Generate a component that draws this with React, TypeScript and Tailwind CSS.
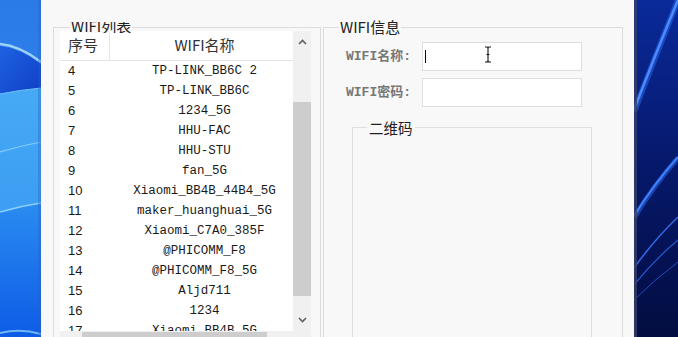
import React from 'react';

const rows: [number, string][] = [
  [4, 'TP-LINK_BB6C 2'],
  [5, 'TP-LINK_BB6C'],
  [6, '1234_5G'],
  [7, 'HHU-FAC'],
  [8, 'HHU-STU'],
  [9, 'fan_5G'],
  [10, 'Xiaomi_BB4B_44B4_5G'],
  [11, 'maker_huanghuai_5G'],
  [12, 'Xiaomi_C7A0_385F'],
  [13, '@PHICOMM_F8'],
  [14, '@PHICOMM_F8_5G'],
  [15, 'Aljd711'],
  [16, '1234'],
  [17, 'Xiaomi_BB4B_5G'],
];

const cjk = "font-['Noto_Sans_CJK_SC',sans-serif]";

const Chevron = ({ up }: { up?: boolean }) => (
  <svg width="9" height="6" viewBox="0 0 9 6">
    <path d={up ? 'M1 5 L4.5 1.5 L8 5' : 'M1 1 L4.5 4.5 L8 1'} fill="none" stroke="#606060" strokeWidth="1.6" />
  </svg>
);

const LeftWallpaper = () => (
  <svg width="41" height="337" viewBox="0 0 41 337" className="block shrink-0">
    <defs>
      <linearGradient id="lw1" x1="0" y1="0" x2="0" y2="1">
        <stop offset="0" stopColor="#2a7ae8" />
        <stop offset="1" stopColor="#3b93f0" />
      </linearGradient>
      <linearGradient id="lw2" x1="0" y1="0" x2="1" y2="1">
        <stop offset="0" stopColor="#1f62e2" />
        <stop offset="1" stopColor="#0f3fc6" />
      </linearGradient>
      <linearGradient id="lw3" x1="0" y1="0" x2="0" y2="1">
        <stop offset="0" stopColor="#47aaf5" />
        <stop offset="1" stopColor="#3c9df2" />
      </linearGradient>
      <linearGradient id="lw4" x1="0" y1="0" x2="0" y2="1">
        <stop offset="0" stopColor="#2a8cf0" />
        <stop offset="1" stopColor="#0e5be6" />
      </linearGradient>
    </defs>
    <rect width="41" height="337" fill="url(#lw1)" />
    <path d="M0 46 Q20 48 41 64 L41 88 Q20 90 0 94 Z" fill="url(#lw2)" />
    <path d="M0 44 Q20 46 41 62" fill="none" stroke="#9fd2f8" strokeWidth="2.5" />
    <path d="M0 94 Q20 90 41 88 L41 205 Q20 206 0 212 Z" fill="url(#lw3)" />
    <path d="M0 94 Q20 90 41 88" fill="none" stroke="#6cc0f7" strokeWidth="1.2" />
    <path d="M0 152 Q20 146 41 142" fill="none" stroke="#82ccf8" strokeWidth="1.2" />
    <path d="M0 212 Q20 206 41 203 L41 337 L0 337 Z" fill="url(#lw4)" />
    <path d="M0 212 Q20 206 41 203" fill="none" stroke="#8ccff8" strokeWidth="1.4" />
    <path d="M0 333 Q20 328 41 334" fill="none" stroke="#6fb8f5" strokeWidth="2" />
    <rect x="38" width="3" height="337" fill="#2a5fc0" opacity="0.35" />
  </svg>
);

const RightWallpaper = () => (
  <svg width="44" height="337" viewBox="0 0 44 337" className="block shrink-0">
    <defs>
      <linearGradient id="rw" x1="0" y1="0" x2="0" y2="1">
        <stop offset="0" stopColor="#0a2a9a" />
        <stop offset="0.5" stopColor="#06186a" />
        <stop offset="1" stopColor="#030d40" />
      </linearGradient>
    </defs>
    <rect width="44" height="337" fill="url(#rw)" />
    <path d="M0 112 Q20 60 44 0" fill="none" stroke="#2b6cf0" strokeWidth="6" opacity="0.5" />
    <path d="M0 110 Q20 58 44 0" fill="none" stroke="#4a8cff" strokeWidth="2.5" />
    <path d="M0 218 Q20 185 44 158" fill="none" stroke="#2f6ef0" strokeWidth="5" opacity="0.5" />
    <path d="M0 216 Q20 184 44 157" fill="none" stroke="#3d82ff" strokeWidth="2" />
    <path d="M0 268 Q20 240 44 217" fill="none" stroke="#2f6ae8" strokeWidth="1.5" />
    <path d="M0 285 Q20 260 44 240" fill="none" stroke="#2458d0" strokeWidth="1.2" />
    <path d="M0 300 Q20 280 44 262" fill="none" stroke="#1f4cc0" strokeWidth="1" />
    <rect width="3" height="337" fill="#38406a" opacity="0.8" />
  </svg>
);

const WifiList = () => (
  <div className="relative w-[268px] h-[330px] border border-[#dcdcdc] pt-[3px] pl-[6px]">
    <div className="absolute left-[16px] top-[-6px] h-[11px] overflow-hidden bg-[#f8f8f8] px-[1px]">
      <span className={`block -mt-[6px] text-[15px] leading-[20px] text-[#222] ${cjk}`}>WIFI列表</span>
    </div>
    <div className="flex w-[251px] h-[310px] bg-white">
      <div className="flex flex-col w-[233px]">
        <div className={`flex h-[30px] shrink-0 border-b border-[#e5e5e5] text-[15px] text-[#333] ${cjk}`}>
          <div className="w-[50px] border-r border-[#e5e5e5] pl-[8px] flex items-center">序号</div>
          <div className="flex-1 flex items-center justify-center pl-[6px]">WIFI名称</div>
        </div>
        <div className="h-[270px] shrink-0 overflow-hidden">
          {rows.map(([n, name]) => (
            <div key={n} className="flex h-[20px] items-center text-[#1a1a1a]">
              <div className="w-[50px] pl-[8px] text-[13px] font-['Liberation_Sans',sans-serif]">{n}</div>
              <div className="flex-1 text-center pl-[6px] text-[12.5px] font-['Liberation_Mono',monospace] whitespace-pre">{name}</div>
            </div>
          ))}
        </div>
        <div className="h-[17px] shrink-0 bg-[#f0f0f0] pt-[1px]">
          <div className="ml-[22px] w-[185px] h-[15px] bg-[#cdcdcd]" />
        </div>
      </div>
      <div className="flex flex-col w-[18px] bg-[#f0f0f0]">
        <div className="h-[22px] flex items-center justify-center"><Chevron up /></div>
        <div className="h-[49px]" />
        <div className="h-[194px] bg-[#cdcdcd]" />
        <div className="h-[13px]" />
        <div className="h-[22px] flex items-center justify-center"><Chevron /></div>
      </div>
    </div>
  </div>
);

const Field = ({ label, active }: { label: string; active?: boolean }) => (
  <div className="flex items-center">
    <div className={`w-[76px] text-[13px] font-bold text-[#777] font-['Liberation_Mono','Noto_Sans_CJK_SC',monospace]`}>{label}</div>
    <div className="relative w-[160px] h-[29px] bg-white border border-[#dedede] pl-[2px] pt-[7px]">
      {active && (
        <>
          <div className="w-[1px] h-[13px] bg-black" />
          <svg className="absolute left-[61px] top-[3px]" width="8" height="17" viewBox="0 0 8 17">
            <path d="M1 1 H3 Q4 1 4 2.5 V14.5 Q4 16 3 16 H1 M7 1 H5 Q4 1 4 2.5 M4 14.5 Q4 16 5 16 H7 M2.5 8.5 H5.5" fill="none" stroke="#111" strokeWidth="1.1" />
          </svg>
        </>
      )}
    </div>
  </div>
);

const WifiInfo = () => (
  <div className="relative w-[300px] h-[330px] border border-[#dcdcdc] pt-[14px]">
    <span className={`absolute left-[15px] top-[-11px] px-[1px] bg-[#f8f8f8] text-[15px] leading-[20px] text-[#222] ${cjk}`}>WIFI信息</span>
    <div className="flex flex-col gap-[7px] pl-[22px]">
      <Field label="WIFI名称:" active />
      <Field label="WIFI密码:" />
    </div>
    <div className="relative ml-[28px] mt-[20px] w-[240px] h-[230px] border border-[#e0e0e0]">
      <span className={`absolute left-[14px] top-[-10px] px-[2px] bg-[#f8f8f8] text-[14.5px] leading-[20px] text-[#222] ${cjk}`}>二维码</span>
    </div>
  </div>
);

export default function App() {
  return (
    <div className="flex w-[678px] h-[337px] overflow-hidden">
      <LeftWallpaper />
      <div className="w-[593px] shrink-0 bg-[#f8f8f8] flex items-start gap-[2px] pl-[12px] pt-[27px]">
        <WifiList />
        <WifiInfo />
      </div>
      <RightWallpaper />
    </div>
  );
}
